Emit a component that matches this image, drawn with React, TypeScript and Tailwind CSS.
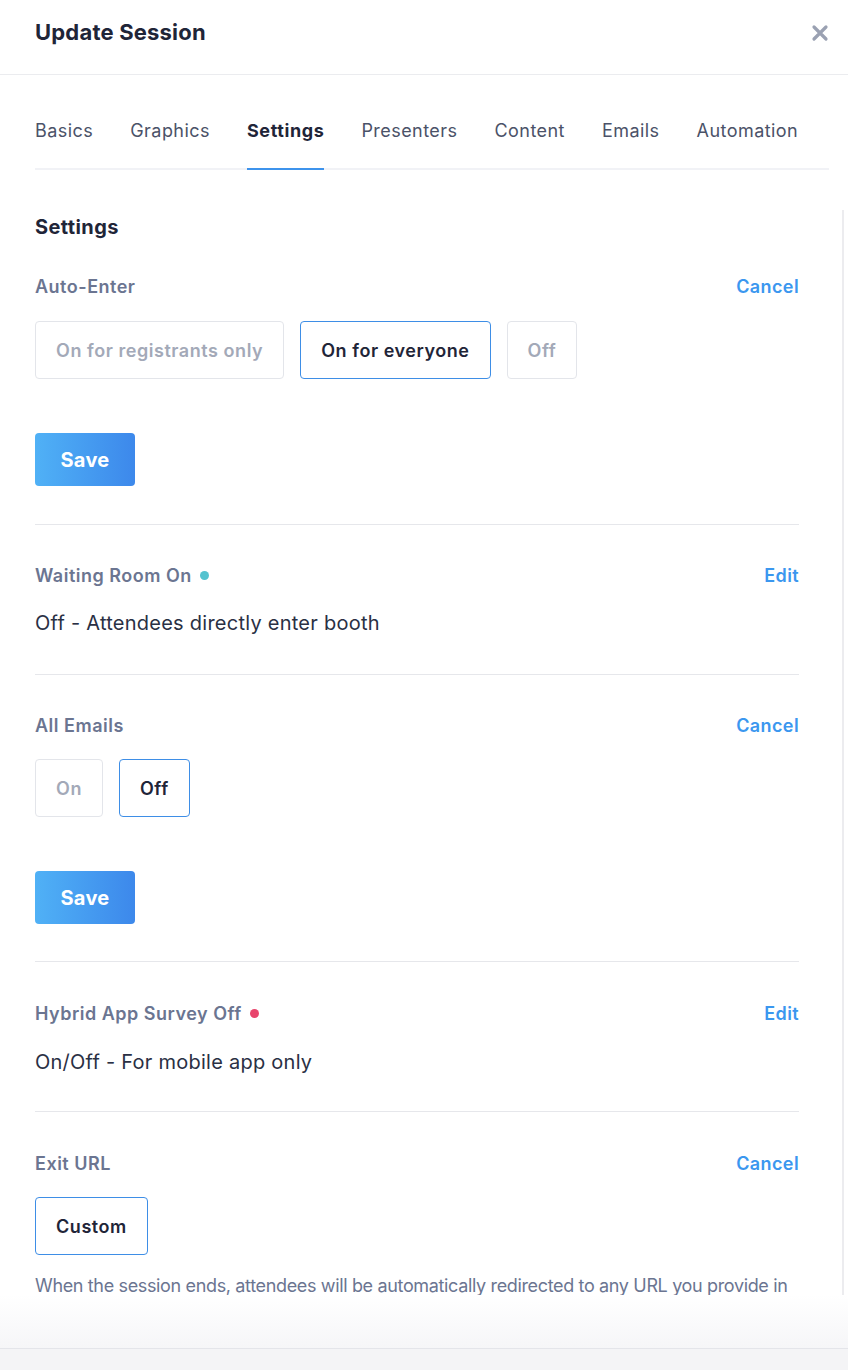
import type { ReactNode } from 'react';

const tabs = ['Basics', 'Graphics', 'Settings', 'Presenters', 'Content', 'Emails', 'Automation'];

function SectionHeader({ label, action, dot }: { label: string; action: string; dot?: string }) {
  return (
    <div className="flex items-center justify-between">
      <div className="flex items-center gap-2">
        <span className="text-[18px] font-semibold tracking-[0.5px] text-[#6b7591]">{label}</span>
        {dot && <span className={`h-[9px] w-[9px] rounded-full ${dot}`} />}
      </div>
      <button className="text-[18px] font-semibold tracking-[0.4px] text-[#3b97ef]">{action}</button>
    </div>
  );
}

function Option({ children, active }: { children: ReactNode; active?: boolean }) {
  return (
    <button
      className={`flex h-[58px] items-center rounded-[4px] border px-[20px] text-[18px] font-semibold tracking-[0.55px] ${
        active ? 'border-[#3e8ee6] text-[#1f2538]' : 'border-[#e3e5ea] text-[#a3a9b8]'
      }`}
    >
      {children}
    </button>
  );
}

function SaveButton() {
  return (
    <button className="h-[53px] w-[100px] rounded-[4px] bg-gradient-to-r from-[#50b1f6] to-[#3d88eb] text-[20px] font-bold tracking-[0.3px] text-white">
      Save
    </button>
  );
}

export default function App() {
  return (
    <div
      className="flex h-[1370px] w-[848px] flex-col overflow-hidden bg-white text-[#1f2538]"
      style={{ fontFamily: 'Inter, "Noto Sans", sans-serif' }}
    >
      <header className="flex h-[75px] shrink-0 items-center justify-between border-b border-[#ebecef] pb-[9px] pl-[35px] pr-[19px]">
        <h1 className="text-[22px] font-bold tracking-[0.2px] text-[#1f2538]">Update Session</h1>
        <svg width="18" height="18" viewBox="0 0 18 18" className="mt-[1px]">
          <path d="M3 3 L15 15 M15 3 L3 15" stroke="#9aa1b2" strokeWidth="3.2" strokeLinecap="round" />
        </svg>
      </header>

      <nav className="ml-[35px] mr-[19px] flex h-[95px] shrink-0 items-end gap-[37px] border-b-2 border-[#f1f2f6]">
        {tabs.map((t) => (
          <div
            key={t}
            className={`-mb-[2px] flex h-[51px] items-start border-b-2 text-[18px] leading-[24px] ${
              t === 'Settings'
                ? 'border-[#3e93ec] font-bold tracking-[0.6px] text-[#1f2538]'
                : 'border-transparent tracking-[0.45px] text-[#4b5268]'
            }`}
          >
            {t}
          </div>
        ))}
      </nav>

      <div className="flex min-h-0 flex-1">
        <main className="flex-1 overflow-hidden pl-[35px] pr-[43px] pt-[45px]">
          <h2 className="text-[20px] font-bold leading-[24px] tracking-[0.4px] text-[#1f2538]">Settings</h2>

          <section className="mt-[34px] border-b border-[#e6e7eb] pb-[38px]">
            <SectionHeader label="Auto-Enter" action="Cancel" />
            <div className="mt-[21px] flex gap-4">
              <Option>On for registrants only</Option>
              <Option active>On for everyone</Option>
              <Option>Off</Option>
            </div>
            <div className="mt-[54px]">
              <SaveButton />
            </div>
          </section>

          <section className="border-b border-[#e6e7eb] pb-[36px] pt-[37px]">
            <SectionHeader label="Waiting Room On" action="Edit" dot="bg-[#55c3cf]" />
            <p className="mt-[19px] text-[20px] tracking-[0.25px] text-[#2a3044]">Off - Attendees directly enter booth</p>
          </section>

          <section className="border-b border-[#e6e7eb] pb-[37px] pt-[37px]">
            <SectionHeader label="All Emails" action="Cancel" />
            <div className="mt-[20px] flex gap-4">
              <Option>On</Option>
              <Option active>Off</Option>
            </div>
            <div className="mt-[54px]">
              <SaveButton />
            </div>
          </section>

          <section className="border-b border-[#e6e7eb] pb-[34px] pt-[38px]">
            <SectionHeader label="Hybrid App Survey Off" action="Edit" dot="bg-[#e8456c]" />
            <p className="mt-[20px] text-[20px] tracking-[0.25px] text-[#2a3044]">On/Off - For mobile app only</p>
          </section>

          <section className="pt-[38px]">
            <SectionHeader label="Exit URL" action="Cancel" />
            <div className="mt-[20px] flex">
              <Option active>Custom</Option>
            </div>
            <p className="mt-[18px] text-[18px] leading-[26px] tracking-[-0.35px] text-[#6b7591]">
              When the session ends, attendees will be automatically redirected to any URL you provide in
              this field.
            </p>
          </section>
        </main>
        <div className="mr-[4px] mt-[40px] w-[2px] bg-[#ececef]" />
      </div>

      <div className="h-[53px] shrink-0 bg-gradient-to-b from-white to-[#f6f6f8]" />
      <footer className="h-[22px] shrink-0 border-t border-[#e4e5ea] bg-[#f4f4f6]" />
    </div>
  );
}
